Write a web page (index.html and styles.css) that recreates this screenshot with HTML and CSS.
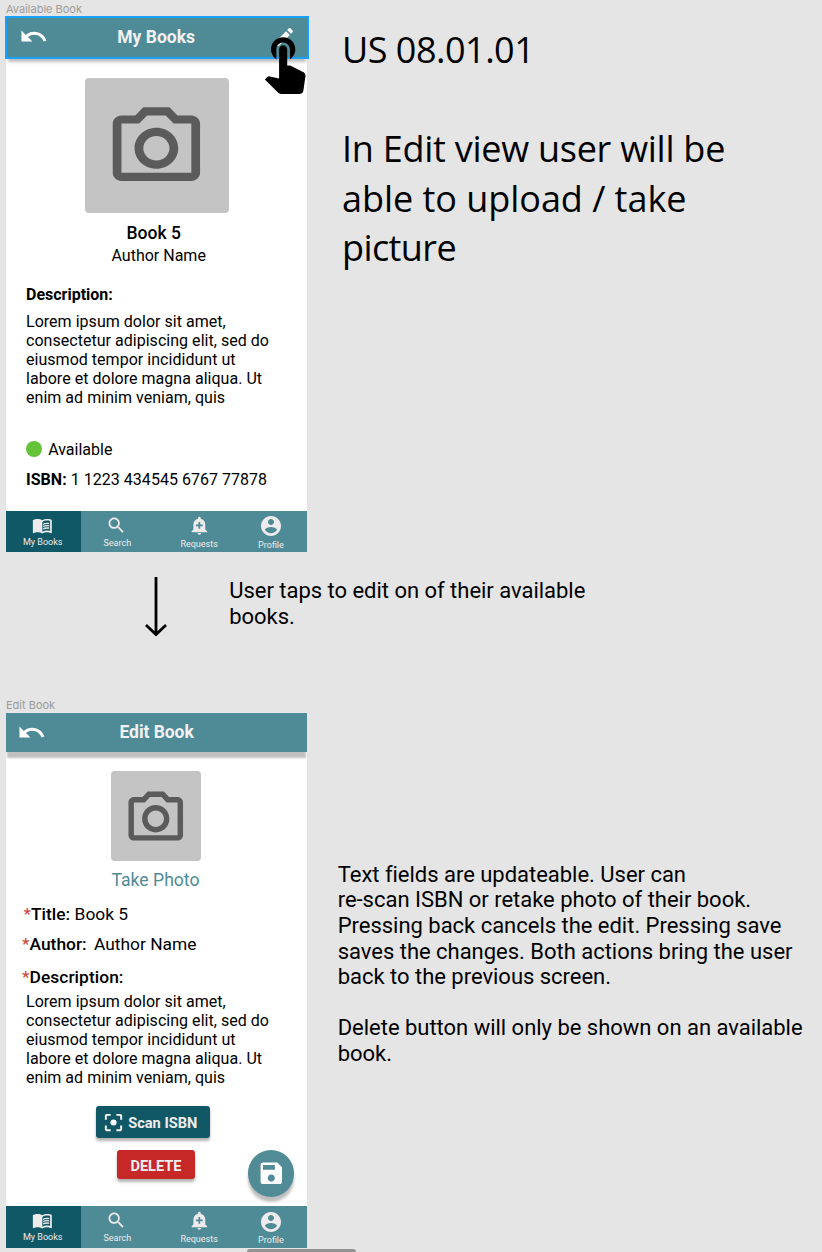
FILE: index.html
```html
<!DOCTYPE html>
<html lang="en">
<head>
<meta charset="utf-8">
<title>US 08.01.01</title>
<link rel="stylesheet" href="styles.css">
</head>
<body>
<svg class="defs" aria-hidden="true">
  <symbol id="undo" viewBox="0 0 24 24"><path d="M12.5 8c-2.65 0-5.05.99-6.9 2.6L2 7v9h9l-3.62-3.62c1.39-1.16 3.16-1.88 5.12-1.88 3.54 0 6.55 2.31 7.6 5.5l2.37-.78C21.08 11.03 17.15 8 12.5 8z"/></symbol>
  <symbol id="camera" viewBox="0 0 24 24" preserveAspectRatio="none"><path d="M14.12 4l1.83 2H20v12H4V6h4.05l1.83-2h4.24M15 2H9L7.17 4H4c-1.1 0-2 .9-2 2v12c0 1.1.9 2 2 2h16c1.1 0 2-.9 2-2V6c0-1.1-.9-2-2-2h-3.17L15 2zm-3 7c1.65 0 3 1.35 3 3s-1.35 3-3 3-3-1.35-3-3 1.35-3 3-3m0-2c-2.76 0-5 2.24-5 5s2.24 5 5 5 5-2.24 5-5-2.24-5-5-5z"/></symbol>
  <symbol id="book" viewBox="0 0 24 24"><path d="M21 5c-1.11-.35-2.33-.5-3.5-.5-1.95 0-4.05.4-5.5 1.5-1.45-1.1-3.55-1.5-5.5-1.5S2.45 4.9 1 6v14.65c0 .25.25.5.5.5.1 0 .15-.05.25-.05C3.1 20.45 5.05 20 6.5 20c1.95 0 4.05.4 5.5 1.5 1.35-.85 3.8-1.5 5.5-1.5 1.65 0 3.35.3 4.75 1.05.1.05.15.05.25.05.25 0 .5-.25.5-.5V6c-.6-.45-1.25-.75-2-1zm0 13.5c-1.1-.35-2.3-.5-3.5-.5-1.7 0-4.15.65-5.5 1.5V8c1.35-.85 3.8-1.5 5.5-1.5 1.2 0 2.4.15 3.5.5v11.5z"/><path d="M17.5 10.5c.88 0 1.73.09 2.5.26V9.24c-.79-.15-1.64-.24-2.5-.24-1.7 0-3.24.29-4.5.83v1.66c1.13-.64 2.7-.99 4.5-.99zM13 12.49v1.66c1.13-.64 2.7-.99 4.5-.99.88 0 1.73.09 2.5.26V11.9c-.79-.15-1.64-.24-2.5-.24-1.7 0-3.24.3-4.5.83zm4.5 1.84c-1.7 0-3.24.29-4.5.83v1.66c1.13-.64 2.7-.99 4.5-.99.88 0 1.73.09 2.5.26v-1.52c-.79-.16-1.64-.24-2.5-.24z"/></symbol>
  <symbol id="search" viewBox="0 0 24 24"><path d="M15.5 14h-.79l-.28-.27C15.41 12.59 16 11.11 16 9.5 16 5.91 13.09 3 9.5 3S3 5.91 3 9.5 5.91 16 9.5 16c1.61 0 3.09-.59 4.23-1.57l.27.28v.79l5 4.99L20.49 19l-4.99-5zm-6 0C7.01 14 5 11.99 5 9.5S7.01 5 9.5 5 14 7.01 14 9.5 11.99 14 9.5 14z"/></symbol>
  <symbol id="bell" viewBox="0 0 24 24"><path d="M10.01 21.01c0 1.1.89 1.99 1.99 1.99s1.99-.89 1.99-1.99h-3.98zm8.87-4.19V11c0-3.25-2.25-5.97-5.29-6.69v-.72C13.59 2.71 12.88 2 12 2s-1.59.71-1.59 1.59v.72C7.37 5.03 5.12 7.75 5.12 11v5.82L3 18.94V20h18v-1.06l-2.12-2.12zM16 13.01h-3v3h-2v-3H8V11h3V8h2v3h3v2.01z"/></symbol>
  <symbol id="person" viewBox="0 0 24 24"><path d="M12 2C6.48 2 2 6.48 2 12s4.48 10 10 10 10-4.48 10-10S17.52 2 12 2zm0 3c1.66 0 3 1.34 3 3s-1.34 3-3 3-3-1.34-3-3 1.34-3 3-3zm0 14.2c-2.5 0-4.71-1.28-6-3.22.03-1.99 4-3.08 6-3.08 1.99 0 5.97 1.09 6 3.08-1.29 1.94-3.5 3.22-6 3.22z"/></symbol>
</svg>

<main class="board">
  <section class="row row-view">
    <div class="frame">
      <div class="frame-label">Available Book</div>
      <div class="phone">
        <header class="bar bar-selected">
          <svg class="icon-undo"><use href="#undo"/></svg>
          <h1 class="bar-title title-books">My Books</h1>
          <svg class="icon-edit" viewBox="0 0 24 24"><path d="M3 17.25V21h3.75L17.81 9.94l-3.75-3.75L3 17.25zM20.71 7.04c.39-.39.39-1.02 0-1.41l-2.34-2.34c-.39-.39-1.02-.39-1.41 0l-1.83 1.83 3.75 3.75 1.83-1.83z"/></svg>
        </header>
        <svg class="tap" viewBox="0 0 24 24"><path d="M9 11.24V7.5C9 6.12 10.12 5 11.5 5S14 6.12 14 7.5v3.74c1.21-.81 2-2.18 2-3.74C16 5.01 13.99 3 11.5 3S7 5.01 7 7.5c0 1.56.79 2.93 2 3.74zm9.84 4.63l-4.54-2.26c-.17-.07-.35-.11-.54-.11H13v-6c0-.83-.67-1.5-1.5-1.5S10 6.67 10 7.5v10.74l-3.43-.72c-.08-.01-.15-.03-.24-.03-.31 0-.59.13-.79.33l-.79.8 4.94 4.94c.27.27.65.44 1.06.44h6.79c.75 0 1.33-.55 1.44-1.28l.75-5.27c.01-.07.02-.14.02-.2 0-.62-.38-1.16-.91-1.38z"/></svg>
        <div class="content">
          <div class="photo photo-large"><svg class="camera-large"><use href="#camera"/></svg></div>
          <div class="book-title">Book 5</div>
          <div class="book-author">Author Name</div>
          <div class="label desc-label">Description:</div>
          <p class="lorem">Lorem ipsum dolor sit amet,<br>consectetur adipiscing elit, sed do<br>eiusmod tempor incididunt ut<br>labore et dolore magna aliqua. Ut<br>enim ad minim veniam, quis</p>
          <div class="status"><span class="dot"></span><span>Available</span></div>
          <div class="isbn"><b>ISBN:</b> 1 1223 434545 6767 77878</div>
        </div>
        <nav class="tabs tabs-view">
          <div class="tab tab-active"><svg><use href="#book"/></svg><span>My Books</span></div>
          <div class="tab tab-search"><svg><use href="#search"/></svg><span>Search</span></div>
          <div class="tab tab-requests"><svg><use href="#bell"/></svg><span>Requests</span></div>
          <div class="tab tab-profile"><svg><use href="#person"/></svg><span>Profile</span></div>
        </nav>
      </div>
    </div>
    <div class="story">
      <div class="story-id">US 08.01.01</div>
      <div class="story-line">In Edit view user will be</div>
      <div class="story-line story-wide">able to upload / take</div>
      <div class="story-line story-tight">picture</div>
    </div>
  </section>

  <section class="row row-step">
    <svg class="arrow" viewBox="0 0 24 62"><path d="M12 1v57M2 49l10 9.5 10-9.5"/></svg>
    <p class="note note-step">User taps to edit on of their available<br>books.</p>
  </section>

  <section class="row row-edit">
    <div class="frame">
      <div class="frame-label">Edit Book</div>
      <div class="phone phone-edit">
        <header class="bar bar-plain">
          <svg class="icon-undo"><use href="#undo"/></svg>
          <h1 class="bar-title title-edit">Edit Book</h1>
        </header>
        <div class="content">
          <div class="photo photo-small"><svg class="camera-small"><use href="#camera"/></svg></div>
          <div class="take-photo">Take Photo</div>
          <div class="field field-title"><i>*</i><b>Title:</b><span>Book 5</span></div>
          <div class="field field-author"><i>*</i><b>Author:</b><span>Author Name</span></div>
          <div class="field field-desc"><i>*</i><b>Description:</b></div>
          <p class="lorem lorem-edit">Lorem ipsum dolor sit amet,<br>consectetur adipiscing elit, sed do<br>eiusmod tempor incididunt ut<br>labore et dolore magna aliqua. Ut<br>enim ad minim veniam, quis</p>
          <div class="btn btn-scan"><svg viewBox="0 0 24 24"><circle cx="12" cy="12" r="3.2"/><path d="M5 15H3v4c0 1.1.9 2 2 2h4v-2H5v-4zM5 5h4V3H5c-1.1 0-2 .9-2 2v4h2V5zm14-2h-4v2h4v4h2V5c0-1.1-.9-2-2-2zm0 16h-4v2h4c1.1 0 2-.9 2-2v-4h-2v4z"/></svg><span>Scan ISBN</span></div>
          <div class="btn btn-delete">DELETE</div>
          <div class="fab"><svg viewBox="0 0 24 24"><path d="M17 3H5c-1.11 0-2 .9-2 2v14c0 1.1.89 2 2 2h14c1.1 0 2-.9 2-2V7l-4-4zm-5 16c-1.66 0-3-1.34-3-3s1.34-3 3-3 3 1.34 3 3-1.34 3-3 3zm3-10H5V5h10v4z"/></svg></div>
        </div>
        <nav class="tabs">
          <div class="tab tab-active"><svg><use href="#book"/></svg><span>My Books</span></div>
          <div class="tab tab-search"><svg><use href="#search"/></svg><span>Search</span></div>
          <div class="tab tab-requests"><svg><use href="#bell"/></svg><span>Requests</span></div>
          <div class="tab tab-profile"><svg><use href="#person"/></svg><span>Profile</span></div>
        </nav>
      </div>
    </div>
    <p class="note note-edit">Text fields are updateable. User can<br>re-scan ISBN or retake photo of their book.<br>Pressing back cancels the edit. Pressing save<br>saves the changes. Both actions bring the user<br>back to the previous screen.<br><br>Delete button will only be shown on an available<br>book.</p>
  </section>
  <div class="scrollbar"></div>
</main>
</body>
</html>
```
FILE: styles.css
```css
* { box-sizing: border-box; }
body {
  margin: 0;
  background: #e5e5e5;
  color: #000;
  font-family: Roboto, "Liberation Sans", sans-serif;
  font-size: 16px;
  line-height: 19px;
  overflow: hidden;
}
p, h1 { margin: 0; }
svg { display: block; flex: none; }
.defs { position: absolute; width: 0; height: 0; }

.board { width: 822px; height: 1252px; padding-left: 6px; overflow: hidden; }
.row { display: flex; align-items: flex-start; white-space: nowrap; }
.row-view { height: 552px; }
.row-step { height: 144px; }
.row-edit { height: 553px; }

.frame { width: 301px; flex: none; }
.frame-label {
  height: 17px;
  padding-top: 2px;
  font-family: Inter, sans-serif;
  font-size: 11px;
  line-height: 14px;
  color: #9b9b9b;
}
.phone { position: relative; height: 535.4px; display: flex; flex-direction: column; background: #fff; }
.phone-edit { height: 535px; }
.content { flex: 1; min-height: 0; position: relative; }

.bar { display: flex; flex: none; background: #4f8b96; fill: #fff; color: #f3f1f1; }
.bar-selected {
  height: 43px;
  margin: -1px -1.5px 0;
  border: 2px solid #18a0fb;
  box-shadow: 0 6px 3px -3px rgba(0, 0, 0, .26);
  padding: 4px 0 0 12.5px;
}
.bar-plain { height: 39px; box-shadow: 0 7px 2px -1px rgba(0, 0, 0, .25); clip-path: inset(0 0 -12px 0); padding: 5px 0 0 10.5px; }
.icon-undo { width: 29.3px; height: 29.3px; }
.bar-title { font-size: 17.5px; line-height: 22px; font-weight: 700; }
.title-books { margin: 4px 0 0 69px; width: 79.5px; }
.title-edit { margin: 3px 0 0 73.7px; letter-spacing: -.05px; }
.icon-edit { width: 24px; height: 24px; margin: 3px 0 0 75.5px; }
.tap { position: absolute; left: 245.8px; top: 12px; width: 65px; height: 65px; z-index: 2; }

.photo { background: #c4c4c4; border-radius: 4px; fill: #5b5b5b; display: flex; justify-content: center; }
.photo-large { width: 144px; height: 135px; margin: 19px 0 0 79px; padding: 20.5px 2px 0 0; }
.camera-large { width: 104.8px; height: 98.4px; }
.photo-small { width: 90px; height: 90px; margin: 19px 0 0 105.3px; padding: 14.5px 2px 0 0; }
.camera-small { width: 65.5px; height: 65.5px; }

.book-title { font-size: 17.5px; font-weight: 500; line-height: 20px; margin: 10px 0 0 120.5px; }
.book-author { margin: 3px 0 0 105.5px; }
.label, .isbn b { font-weight: 700; }
.desc-label { margin: 20px 0 0 20px; }
.lorem { margin: 7.5px 0 0 20px; letter-spacing: .03px; }
.status { display: flex; align-items: center; gap: 6.5px; margin: 33px 0 0 19.7px; }
.dot { width: 16px; height: 16px; border-radius: 50%; background: #66c337; }
.isbn { margin: 11px 0 0 20px; letter-spacing: .03px; }

.take-photo { font-size: 17.6px; line-height: 21px; color: #4f8b96; margin: 9.3px 0 0 105.5px; }
.field { display: flex; font-size: 17.4px; line-height: 20px; }
.field i { font-style: normal; color: #c9453b; }
.field b { font-weight: 500; }
.field-title { margin: 13.2px 0 0 17.4px; }
.field-title span { margin-left: 4.5px; }
.field-author { margin: 9.3px 0 0 16px; }
.field-author span { margin-left: 7.3px; }
.field-desc { margin: 13px 0 0 16px; }
.field-desc b { letter-spacing: .05px; }
.lorem-edit { margin-top: 5px; }

.btn { display: flex; align-items: center; border-radius: 3px; color: #f0eeee; fill: #fff; font-weight: 700; font-size: 14.6px; box-shadow: 0 3px 3px rgba(0, 0, 0, .3); }
.btn-scan { width: 113.5px; height: 32.5px; margin: 19.2px 0 0 90px; padding: 1px 0 0 5.5px; background: #115866; }
.btn-scan svg { width: 23px; height: 23px; margin: -1px 3.7px 0 0; }
.btn-scan span { margin-top: 1px; }
.btn-delete { width: 78px; height: 29.5px; margin: 11.5px 0 0 111px; padding-top: 3px; justify-content: center; background: #c62828; }
.fab {
  position: absolute; right: 12.7px; bottom: 9.5px;
  width: 46.5px; height: 46.5px; border-radius: 50%;
  display: flex; align-items: center; justify-content: center;
  background: #518b96; fill: #fff;
  box-shadow: 0 5px 3px rgba(0, 0, 0, .26);
}
.fab svg { width: 28.6px; height: 28.6px; }

.tabs { display: flex; flex: none; height: 42px; background: #4f8b96; color: #eeebed; fill: #eeebed; font-size: 9px; line-height: 11px; }
.tabs-view { height: 41.6px; }
.tab { display: flex; flex-direction: column; align-items: center; padding-top: 4.3px; }
.tab svg { width: 20.7px; height: 20.7px; }
.tab-active { width: 75.3px; background: #115866; padding-right: 2px; }
.tab-search { margin-left: 20px; width: 32px; }
.tab-search svg { margin-left: -2px; }
.tab-requests { margin-left: 46.8px; width: 38px; }
.tab-profile { margin-left: 37.9px; width: 30px; padding-top: 3.5px; }
.tab-profile svg { width: 24px; height: 24px; margin-bottom: -1px; }
.tab-active span { margin-top: 1.2px; }
.tab-search span { margin-top: 2px; }
.tab-requests span { margin-top: 3px; }
.tab-profile span { margin-top: 2.3px; }

.story { margin: 25.3px 0 0 35px; font-family: "Open Sans", "Noto Sans", sans-serif; font-size: 36px; line-height: 49.5px; }
.story-id { margin-bottom: 49.5px; letter-spacing: -.5px; }
.story-line { letter-spacing: -.26px; }
.story-wide { letter-spacing: -.04px; }
.story-tight { letter-spacing: -.6px; }
.note { font-size: 22px; line-height: 25.6px; }
.arrow { width: 24px; height: 62px; margin: 24px 0 0 138px; fill: none; stroke: #000; stroke-width: 2.8; }
.note-step { margin: 26.3px 0 0 61.2px; letter-spacing: -.02px; }
.note-edit { margin: 165.8px 0 0 30.7px; letter-spacing: -.02px; }
.scrollbar { width: 109.5px; height: 8px; margin-left: 240.8px; border-radius: 3px; background: #929292; }
```
